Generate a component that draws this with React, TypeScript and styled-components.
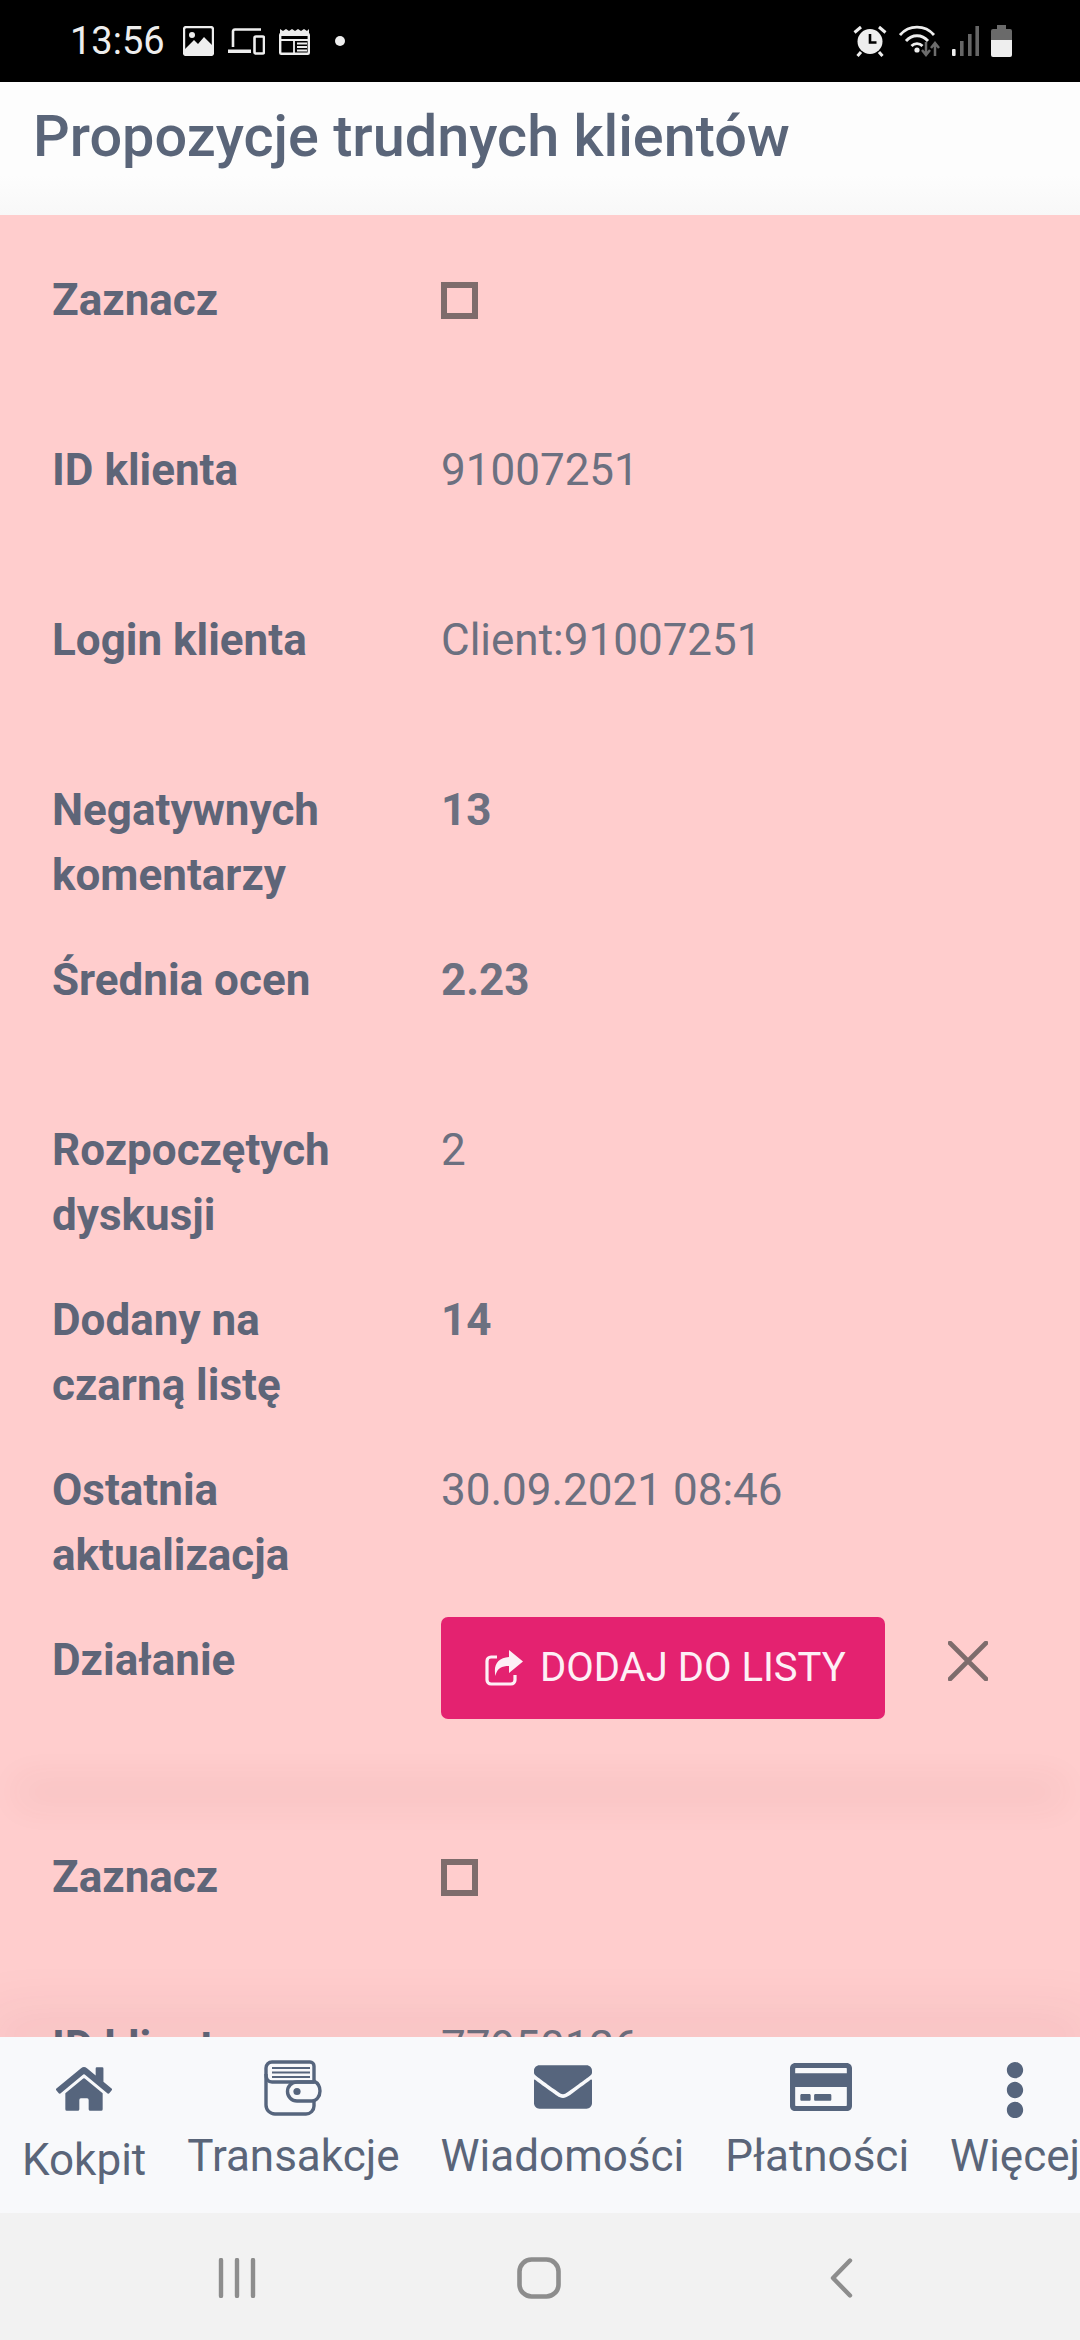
import React from "react";
import styled, { createGlobalStyle } from "styled-components";
import { FaEllipsisV, FaEnvelope, FaHome, FaRegCreditCard } from "react-icons/fa";

const COLORS = {
  slate: "#5a6579",
  label: "#5e6578",
  value: "#6c7080",
  icon: "#56657d",
  pink: "#ffcdcd",
  accent: "#e42270",
  brown: "#7e6c6c",
  navBar: "#f8f9fb",
  system: "#f2f2f2",
  sysIcon: "#8d8d8d",
  status: "#eeeeee",
};

const GlobalStyle = createGlobalStyle`
  html, body {
    margin: 0;
    padding: 0;
    background: ${COLORS.pink};
  }
  * {
    box-sizing: border-box;
  }
`;

const Screen = styled.div`
  width: 1080px;
  height: 2340px;
  display: flex;
  flex-direction: column;
  overflow: hidden;
  font-family: Roboto, "Liberation Sans", sans-serif;
`;

const StatusBar = styled.div`
  height: 82px;
  flex-shrink: 0;
  background: #000;
  color: ${COLORS.status};
  display: flex;
  justify-content: space-between;
  align-items: center;
  padding: 0 68px 0 70px;
`;

const StatusGroup = styled.div`
  display: flex;
  align-items: center;
  gap: ${(p: { $gap: number }) => p.$gap}px;
`;

const Clock = styled.span`
  font-size: 38px;
  line-height: 38px;
  margin-right: 4px;
`;

const Header = styled.header`
  height: 133px;
  flex-shrink: 0;
  padding: 19px 33px 0;
  background: linear-gradient(#fdfdfd 0%, #fdfdfd 70%, #f8f8f8 100%);
`;

const Title = styled.h1`
  margin: 0;
  font-size: 57.6px;
  line-height: 72px;
  font-weight: 500;
  color: ${COLORS.slate};
`;

const List = styled.main`
  flex: 1;
  min-height: 0;
  overflow: hidden;
  background: ${COLORS.pink};
`;

const Card = styled.section`
  padding-top: 53px;
`;

const CardShadow = styled.div`
  height: 0;
  margin: 0 30px;
  box-shadow: 0 0 34px 12px rgba(130, 60, 60, 0.07);
`;

const Row = styled.div<{ $last?: boolean }>`
  display: grid;
  grid-template-columns: 389px 1fr;
  padding-left: 52px;
  min-height: ${(p) => (p.$last ? 164 : 170)}px;
  font-size: 44px;
  line-height: 65px;
`;

const Label = styled.div`
  font-weight: 700;
  color: ${COLORS.label};
  max-width: 310px;
`;

const Value = styled.div<{ $bold?: boolean }>`
  color: ${COLORS.value};
  font-weight: ${(p) => (p.$bold ? 700 : 400)};
`;

const Checkbox = styled.input`
  appearance: none;
  display: block;
  width: 37px;
  height: 37px;
  margin: 14px 0 0;
  border: 6px solid ${COLORS.brown};
  background: transparent;
`;

const Actions = styled.div`
  display: flex;
  align-items: center;
  margin-top: -11px;
  height: 102px;
`;

const AddButton = styled.button`
  width: 444px;
  height: 102px;
  border: 0;
  border-radius: 7px;
  background: ${COLORS.accent};
  color: #fdf0f6;
  font-family: inherit;
  font-size: 40px;
  line-height: 40px;
  display: flex;
  align-items: center;
  gap: 17px;
  padding: 0 0 0 44px;
  white-space: nowrap;
`;

const CloseButton = styled.button`
  border: 0;
  padding: 0 0 14px;
  background: none;
  margin-left: 63px;
  display: flex;
`;

const BottomNav = styled.nav`
  height: 176px;
  flex-shrink: 0;
  position: relative;
  z-index: 1;
  overflow: hidden;
  background: ${COLORS.navBar};
  display: flex;
  gap: 41px;
  padding-left: 22px;
  color: ${COLORS.slate};
`;

const NavShadow = styled.div`
  height: 0;
  flex-shrink: 0;
  position: relative;
  z-index: 1;
  box-shadow: 0 0 60px 14px rgba(120, 50, 60, 0.13);
`;

const NavItem = styled.a`
  display: flex;
  flex-direction: column;
  align-items: center;
  flex-shrink: 0;
  color: inherit;
`;

const NavIcon = styled.div<{ $height: number; $top: number; $right?: number }>`
  height: ${(p) => p.$height}px;
  padding-top: ${(p) => p.$top}px;
  margin-left: ${(p) => p.$right ?? 0}px;
  display: flex;
  color: ${COLORS.icon};
`;

const NavLabel = styled.span`
  font-size: 44px;
  line-height: 50px;
  white-space: nowrap;
`;

const SystemBar = styled.div`
  height: 127px;
  flex-shrink: 0;
  background: ${COLORS.system};
  display: flex;
  align-items: center;
  gap: 261px;
  padding: 3px 0 0 218px;
`;

const PictureIcon = () => (
  <svg width="31" height="30" viewBox="0 0 31 30">
    <rect x="1" y="1" width="29" height="28" rx="2.5" fill="none" stroke="#eee" strokeWidth="2.4" />
    <circle cx="9" cy="9" r="3" fill="#eee" />
    <path d="M1 24 L11 14 L15 18 L21 11 L30 20 V29 H1 Z" fill="#eee" />
  </svg>
);

const DevicesIcon = () => (
  <svg width="37" height="27" viewBox="0 0 37 27">
    <path d="M5 19 V3 A2 2 0 0 1 7 1.5 H33" fill="none" stroke="#eee" strokeWidth="2.6" />
    <rect x="0" y="21.5" width="23" height="3.5" fill="#eee" />
    <rect x="26.5" y="8.5" width="9.5" height="17" rx="1.5" fill="none" stroke="#eee" strokeWidth="2.6" />
  </svg>
);

const NewsIcon = () => (
  <svg width="31" height="27" viewBox="0 0 31 27">
    <path d="M1 1 L4 3 L7 1 L10 3 L13 1 L16 3 L19 1 L22 3 L25 1 L28 3 L30 1 V8 H1 Z" fill="#eee" />
    <rect x="1.2" y="6" width="28.6" height="19.8" rx="1" fill="none" stroke="#eee" strokeWidth="2.4" />
    <path d="M1 12 H30 M15 12 V26 M18 15.5 H28 M18 19 H28 M18 22.5 H28" stroke="#eee" strokeWidth="1.8" />
  </svg>
);

const Dot = styled.span`
  width: 10px;
  height: 10px;
  border-radius: 50%;
  background: ${COLORS.status};
  margin-left: 11px;
`;

const AlarmIcon = () => (
  <svg width="34" height="32" viewBox="0 0 34 32">
    <circle cx="17" cy="16.5" r="12.5" fill="#eee" />
    <path d="M17 9 V17.5 H23.5" fill="none" stroke="#000" strokeWidth="2.6" />
    <path d="M1.5 7.5 L8 2 M32.5 7.5 L26 2 M8 27 L4.5 31 M26 27 L29.5 31" stroke="#eee" strokeWidth="3" />
  </svg>
);

const WifiIcon = () => (
  <svg width="41" height="32" viewBox="0 0 41 32">
    <g fill="none" stroke="#eee" strokeWidth="2.8">
      <path d="M1 10 C10 -0.5 26 -0.5 35 10" />
      <path d="M7 16 C13 9 23 9 29 16" />
      <path d="M12.5 21 C15.5 17.8 20.5 17.8 23.5 21" />
    </g>
    <circle cx="18" cy="25" r="2.6" fill="#eee" />
    <path d="M27 17 V29 M23 25 L27 30 L31 25" fill="none" stroke="#6c6c6c" strokeWidth="2.5" />
    <path d="M36 31 V19 M32 23 L36 18 L40 23" fill="none" stroke="#6c6c6c" strokeWidth="2.5" />
  </svg>
);

const SignalIcon = () => (
  <svg width="27" height="30" viewBox="0 0 27 30">
    <rect x="0" y="23" width="3.6" height="7" rx="1" fill="#eee" />
    <rect x="8" y="15" width="3.6" height="15" fill="#666" />
    <rect x="16" y="8" width="3.6" height="22" fill="#666" />
    <rect x="23.4" y="0" width="3.6" height="30" fill="#666" />
  </svg>
);

const BatteryIcon = () => (
  <svg width="21" height="32" viewBox="0 0 21 32">
    <rect x="6" y="0" width="9" height="4" fill="#6a6a6a" />
    <path d="M0 6 A2 2 0 0 1 2 4 H19 A2 2 0 0 1 21 6 V15 H0 Z" fill="#6a6a6a" />
    <path d="M0 15 H21 V30 A2 2 0 0 1 19 32 H2 A2 2 0 0 1 0 30 Z" fill="#eee" />
  </svg>
);

const WalletIcon = () => (
  <svg width="58" height="56" viewBox="0 0 58 56">
    <g fill="none" stroke={COLORS.icon} strokeWidth="3.4">
      <path d="M8 2 H46 A4 4 0 0 1 50 6 V22 H8 C4 22 2 19 2 15 V8 A6 6 0 0 1 8 2 Z" />
      <path d="M2 14 V45 A9 9 0 0 0 11 54 H42 A8 8 0 0 0 50 46 V41" />
      <path d="M50 21 C54 23 56 26 56 31 C56 37 52 41 48 41 H33 A9.5 9.5 0 0 1 33 22 H50" />
      <path d="M8 8 H46 M8 12.5 H46 M8 17 H46" strokeWidth="1.8" />
    </g>
    <circle cx="33" cy="31.5" r="3.6" fill={COLORS.icon} />
  </svg>
);

const ShareIcon = () => (
  <svg width="38" height="36" viewBox="0 0 38 36">
    <path d="M12 7 H6 A4 4 0 0 0 2 11 V30 A4 4 0 0 0 6 34 H26 A4 4 0 0 0 30 30 V25" fill="none" stroke="#fdf0f6" strokeWidth="3.2" />
    <path d="M24 0 L38 11.5 L24 23 V16 C17 16 12 18 10.5 26 C8 15 13 7.5 24 7 Z" fill="#fdf0f6" />
  </svg>
);

const CloseIcon = () => (
  <svg width="40" height="40" viewBox="0 0 40 40">
    <path d="M2 2 L38 38 M38 2 L2 38" stroke={COLORS.brown} strokeWidth="4.6" strokeLinecap="round" />
  </svg>
);

const RecentsIcon = () => (
  <svg width="38" height="40" viewBox="0 0 38 40">
    <path d="M3 2 V38 M19 2 V38 M35 2 V38" stroke={COLORS.sysIcon} strokeWidth="4.4" strokeLinecap="round" />
  </svg>
);

const HomeIcon = () => (
  <svg width="44" height="42" viewBox="0 0 44 42">
    <rect x="2.5" y="2.5" width="39" height="37" rx="12" fill="none" stroke={COLORS.sysIcon} strokeWidth="4.6" />
  </svg>
);

const BackIcon = () => (
  <svg width="31" height="40" viewBox="0 0 31 40">
    <path d="M28 2.5 L11 20 L28 37.5" fill="none" stroke={COLORS.sysIcon} strokeWidth="4.4" strokeLinecap="round" strokeLinejoin="round" />
  </svg>
);

type Field = { label: string; value?: string; bold?: boolean };

const fields: Field[] = [
  { label: "ID klienta", value: "91007251" },
  { label: "Login klienta", value: "Client:91007251" },
  { label: "Negatywnych komentarzy", value: "13", bold: true },
  { label: "Średnia ocen", value: "2.23", bold: true },
  { label: "Rozpoczętych dyskusji", value: "2" },
  { label: "Dodany na czarną listę", value: "14", bold: true },
  { label: "Ostatnia aktualizacja", value: "30.09.2021 08:46" },
];

const navItems = [
  { label: "Kokpit", icon: <FaHome size={56} />, height: 98, top: 24 },
  { label: "Transakcje", icon: <WalletIcon />, height: 94, top: 23 },
  { label: "Wiadomości", icon: <FaEnvelope size={58} />, height: 94, top: 21, right: 2 },
  { label: "Płatności", icon: <FaRegCreditCard size={62} />, height: 94, top: 19, right: 8 },
  { label: "Więcej", icon: <FaEllipsisV size={58} />, height: 94, top: 24 },
];

export default function App() {
  return (
    <Screen>
      <GlobalStyle />
      <StatusBar>
        <StatusGroup $gap={14}>
          <Clock>13:56</Clock>
          <PictureIcon />
          <DevicesIcon />
          <NewsIcon />
          <Dot />
        </StatusGroup>
        <StatusGroup $gap={12}>
          <AlarmIcon />
          <WifiIcon />
          <SignalIcon />
          <BatteryIcon />
        </StatusGroup>
      </StatusBar>

      <Header>
        <Title>Propozycje trudnych klientów</Title>
      </Header>

      <List>
        <Card>
          <Row>
            <Label>Zaznacz</Label>
            <div><Checkbox type="checkbox" readOnly /></div>
          </Row>
          {fields.map((f) => (
            <Row key={f.label}>
              <Label>{f.label}</Label>
              <Value $bold={f.bold}>{f.value}</Value>
            </Row>
          ))}
          <Row $last>
            <Label>Działanie</Label>
            <Actions>
              <AddButton>
                <ShareIcon />
                DODAJ DO LISTY
              </AddButton>
              <CloseButton><CloseIcon /></CloseButton>
            </Actions>
          </Row>
        </Card>
        <CardShadow />
        <Card>
          <Row>
            <Label>Zaznacz</Label>
            <div><Checkbox type="checkbox" readOnly /></div>
          </Row>
          <Row>
            <Label>ID klienta</Label>
            <Value>77950126</Value>
          </Row>
        </Card>
      </List>

      <NavShadow />
      <BottomNav>
        {navItems.map((item) => (
          <NavItem key={item.label}>
            <NavIcon $height={item.height} $top={item.top} $right={item.right}>{item.icon}</NavIcon>
            <NavLabel>{item.label}</NavLabel>
          </NavItem>
        ))}
      </BottomNav>

      <SystemBar>
        <RecentsIcon />
        <HomeIcon />
        <BackIcon />
      </SystemBar>
    </Screen>
  );
}
